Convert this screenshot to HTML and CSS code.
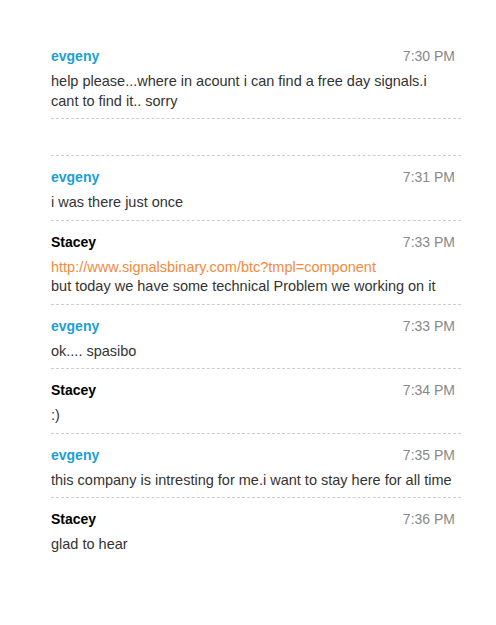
FILE: index.html
```html
<!DOCTYPE html>
<html lang="en">
<head>
    <meta charset="UTF-8">
    <title>Chat</title>
    <link rel="stylesheet" href="styles.css">
</head>
<body>
    <div class="chat-log">
        <div class="msg">
            <div class="msg-head">
                <span class="name client">evgeny</span>
                <span class="time">7:30 PM</span>
            </div>
            <div class="msg-text">help please...where in acount i can find a free day signals.i cant to find it.. sorry</div>
        </div>

        <div class="msg msg-empty"></div>

        <div class="msg">
            <div class="msg-head">
                <span class="name client">evgeny</span>
                <span class="time">7:31 PM</span>
            </div>
            <div class="msg-text">i was there just once</div>
        </div>

        <div class="msg">
            <div class="msg-head">
                <span class="name agent">Stacey</span>
                <span class="time">7:33 PM</span>
            </div>
            <div class="msg-text">
                <a href="#">http://www.signalsbinary.com/btc?tmpl=component</a><br>
                but today we have some technical Problem we working on it
            </div>
        </div>

        <div class="msg">
            <div class="msg-head">
                <span class="name client">evgeny</span>
                <span class="time">7:33 PM</span>
            </div>
            <div class="msg-text">ok.... spasibo</div>
        </div>

        <div class="msg">
            <div class="msg-head">
                <span class="name agent">Stacey</span>
                <span class="time">7:34 PM</span>
            </div>
            <div class="msg-text">:)</div>
        </div>

        <div class="msg">
            <div class="msg-head">
                <span class="name client">evgeny</span>
                <span class="time">7:35 PM</span>
            </div>
            <div class="msg-text">this company is intresting for me.i want to stay here for all time</div>
        </div>

        <div class="msg last">
            <div class="msg-head">
                <span class="name agent">Stacey</span>
                <span class="time">7:36 PM</span>
            </div>
            <div class="msg-text">glad to hear</div>
        </div>
    </div>
</body>
</html>
```

FILE: styles.css
```css
body {
    margin: 0;
    background: #fff;
    font-family: "Liberation Sans", Arial, sans-serif;
    color: #333;
}

.chat-log {
    padding: 36px 35px 0 51px;
}

.msg {
    padding: 11px 0 7px;
    border-bottom: 1px dashed #ccc;
}

.msg:first-child {
    padding-top: 10px;
}

.msg-empty {
    height: 36px;
    padding: 0;
}

.msg.last {
    border-bottom: none;
}

.msg-head {
    display: flex;
    justify-content: space-between;
    align-items: center;
    height: 20px;
    margin-bottom: 6px;
}

.name {
    font-size: 14px;
    font-weight: bold;
}

.name.client {
    color: #1a9fd5;
}

.name.agent {
    color: #000;
}

.time {
    font-size: 14px;
    color: #888;
    padding-right: 6px;
}

.msg-text {
    font-size: 14.5px;
    line-height: 19.5px;
    color: #333;
    padding-right: 7px;
}

.msg-text a {
    color: #f58a3c;
    text-decoration: none;
}
```
